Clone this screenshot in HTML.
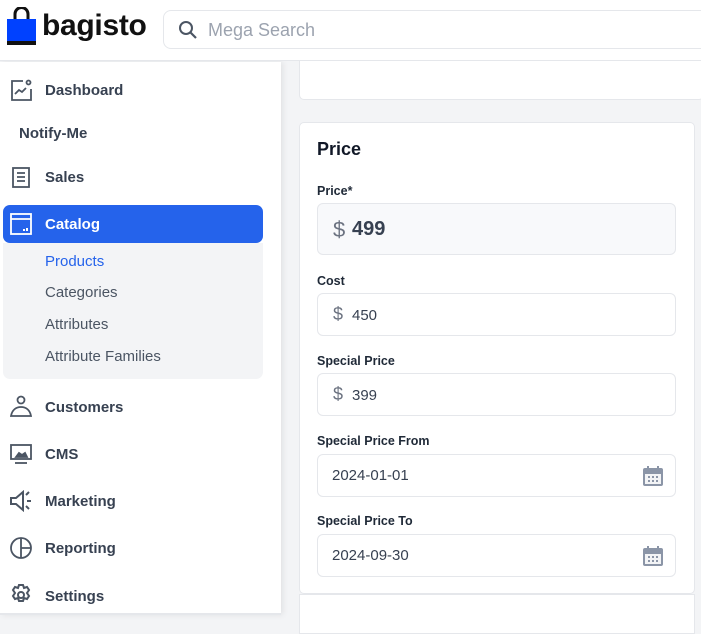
<!DOCTYPE html>
<html><head><meta charset="utf-8"><style>
*{box-sizing:border-box;margin:0;padding:0}
body{width:701px;height:615px;overflow:hidden;background:#f3f4f6;font-family:"Liberation Sans","DejaVu Sans",sans-serif;position:relative}
.hdr{position:absolute;left:0;top:0;width:701px;height:61px;background:#fff;border-bottom:1px solid #e5e7eb;z-index:5}
.logo{position:absolute;left:42px;top:9px;font-size:30px;font-weight:bold;color:#111;letter-spacing:-0.3px}
.search{position:absolute;left:163px;top:10px;width:560px;height:39px;border:1px solid #e5e7eb;border-radius:8px}
.search span{position:absolute;left:44px;top:9px;font-size:18px;color:#9ca3af}
.side{position:absolute;left:0;top:62px;width:281px;height:553px;background:#fff;box-shadow:2px 0 6px rgba(0,0,0,.08);border-bottom:2px solid #e5e7eb}
.it{position:absolute;left:45px;font-size:15px;font-weight:bold;color:#374151}
.ic{position:absolute;left:10px;width:22px;height:22px}
.sub{position:absolute;left:45px;font-size:15px;color:#4b5563}
.card{position:absolute;background:#fff;border:1px solid #e5e7eb;border-radius:5px}
.lbl{position:absolute;left:317px;font-size:12.5px;font-weight:bold;color:#1f2937}
.inp{position:absolute;left:317px;width:359px;height:43px;border:1px solid #e5e7eb;border-radius:6px;background:#fff;font-size:15px;color:#374151}
.inp .d{position:absolute;left:15px;top:10px;font-size:18px;color:#6b7280}
.inp .v{position:absolute;left:34px;top:12px}
.inp .t{position:absolute;left:14px;top:12px}
.cal{position:absolute;right:11px;top:10px}
</style></head><body>
<div class="hdr">
<svg style="position:absolute;left:7px;top:7px" width="29" height="38" viewBox="0 0 29 38"><path d="M8 13V7a6.5 6.5 0 0 1 13 0v6" fill="none" stroke="#111" stroke-width="3"/><rect x="0" y="12" width="29" height="23" fill="#0041ff"/><rect x="0" y="34" width="29" height="4" fill="#111"/></svg>
<div class="logo">bagisto</div>
<div class="search"><svg style="position:absolute;left:14px;top:9px" width="20" height="20" viewBox="0 0 20 20"><circle cx="8" cy="8" r="6" fill="none" stroke="#4b5563" stroke-width="2"/><path d="M12.5 12.5L18 18" stroke="#4b5563" stroke-width="2.2"/></svg><span>Mega Search</span></div>
</div>
<div class="side">
<svg class="ic" style="top:17px" viewBox="0 0 22 22" fill="none" stroke="#4b5563" stroke-width="1.8"><path d="M13 2H2v19h19V10"/><path d="M5 15l4-4 3 2 4-4"/><circle cx="18.5" cy="3.5" r="2"/></svg>
<div class="it" style="top:20px">Dashboard</div>
<div class="it" style="top:63px;left:19px">Notify-Me</div>
<svg class="ic" style="top:104px" viewBox="0 0 22 22" fill="none" stroke="#4b5563" stroke-width="1.8"><rect x="3" y="2" width="16" height="19"/><path d="M7 7h8M7 11h8M7 15h8"/></svg>
<div class="it" style="top:107px">Sales</div>
<div style="position:absolute;left:3px;top:143px;width:260px;height:38px;background:#2563eb;border-radius:7px"></div>
<svg class="ic" style="top:151px" viewBox="0 0 22 22" fill="none" stroke="#fff" stroke-width="1.8"><rect x="1" y="1" width="20" height="20"/><path d="M1 6h20"/><path d="M14 16v2M17 15v3" stroke-width="2"/></svg>
<div class="it" style="top:154px;color:#fff">Catalog</div>
<div style="position:absolute;left:3px;top:181px;width:260px;height:136px;background:#f3f4f6;border-radius:0 0 7px 7px"></div>
<div class="sub" style="top:191px;color:#2563eb">Products</div>
<div class="sub" style="top:222px">Categories</div>
<div class="sub" style="top:254px">Attributes</div>
<div class="sub" style="top:286px">Attribute Families</div>
<svg class="ic" style="top:333px" viewBox="0 0 22 22" fill="none" stroke="#4b5563" stroke-width="1.8"><circle cx="11" cy="5" r="3.5"/><path d="M1 21c1-6 5-9 10-9s9 3 10 9z"/></svg>
<div class="it" style="top:337px">Customers</div>
<svg class="ic" style="top:381px" viewBox="0 0 22 22" fill="none" stroke="#4b5563" stroke-width="1.8"><rect x="1" y="2" width="20" height="14"/><path d="M5 20h12"/><path d="M6 14l3-4 3 2 3-2 2 4z" fill="#4b5563"/></svg>
<div class="it" style="top:384px">CMS</div>
<svg class="ic" style="top:428px" viewBox="0 0 22 22" fill="none" stroke="#4b5563" stroke-width="2"><path d="M1 8h5l7-6v18l-7-6H1z"/><path d="M16 5l3-3M17 11h4M16 16l3 3"/></svg>
<div class="it" style="top:431px">Marketing</div>
<svg class="ic" style="top:475px" viewBox="0 0 22 22" fill="none" stroke="#4b5563" stroke-width="1.8"><circle cx="11" cy="11" r="10"/><path d="M11 1v20M11 11h10"/></svg>
<div class="it" style="top:478px">Reporting</div>
<svg class="ic" style="top:522px" viewBox="0 0 22 22" fill="none" stroke="#4b5563" stroke-width="2"><path d="M9 1h4l1 3 3-1 2 3-2 3 2 3-2 3-3-1-1 3H9l-1-3-3 1-2-3 2-3-2-3 2-3 3 1z"/><circle cx="11" cy="11" r="3"/></svg>
<div class="it" style="top:526px">Settings</div>
</div>
<div class="card" style="left:299px;top:40px;width:405px;height:60px;border-top:none;border-radius:0 0 5px 5px"></div>
<div class="card" style="left:299px;top:122px;width:396px;height:472px"></div>
<div class="card" style="left:299px;top:594px;width:396px;height:40px;border-radius:0"></div>
<div style="position:absolute;left:317px;top:139px;font-size:18px;font-weight:bold;color:#111827">Price</div>
<div class="lbl" style="top:184px">Price*</div>
<div class="inp" style="top:203px;height:52px;background:#f8f9fb"><span class="d" style="top:13px;font-size:22px">$</span><span class="v" style="top:14px;font-size:20px;font-weight:bold">499</span></div>
<div class="lbl" style="top:274px">Cost</div>
<div class="inp" style="top:293px"><span class="d">$</span><span class="v" style="top:13px">450</span></div>
<div class="lbl" style="top:354px">Special Price</div>
<div class="inp" style="top:373px"><span class="d">$</span><span class="v" style="top:13px">399</span></div>
<div class="lbl" style="top:434px">Special Price From</div>
<div class="inp" style="top:454px"><span class="t">2024-01-01</span><svg class="cal" width="22" height="22" viewBox="0 0 22 22"><rect x="1" y="3" width="20" height="18" rx="2" fill="#8b95a7"/><rect x="3" y="9" width="16" height="10" fill="#f3f4f6"/><path d="M6 1v4M16 1v4" stroke="#8b95a7" stroke-width="2"/><g fill="#8b95a7"><rect x="6" y="11" width="2" height="2"/><rect x="10" y="11" width="2" height="2"/><rect x="14" y="11" width="2" height="2"/><rect x="6" y="15" width="2" height="2"/><rect x="10" y="15" width="2" height="2"/><rect x="14" y="15" width="2" height="2"/></g></svg></div>
<div class="lbl" style="top:514px">Special Price To</div>
<div class="inp" style="top:534px"><span class="t">2024-09-30</span><svg class="cal" width="22" height="22" viewBox="0 0 22 22"><rect x="1" y="3" width="20" height="18" rx="2" fill="#8b95a7"/><rect x="3" y="9" width="16" height="10" fill="#f3f4f6"/><path d="M6 1v4M16 1v4" stroke="#8b95a7" stroke-width="2"/><g fill="#8b95a7"><rect x="6" y="11" width="2" height="2"/><rect x="10" y="11" width="2" height="2"/><rect x="14" y="11" width="2" height="2"/><rect x="6" y="15" width="2" height="2"/><rect x="10" y="15" width="2" height="2"/><rect x="14" y="15" width="2" height="2"/></g></svg></div>
</body></html>
